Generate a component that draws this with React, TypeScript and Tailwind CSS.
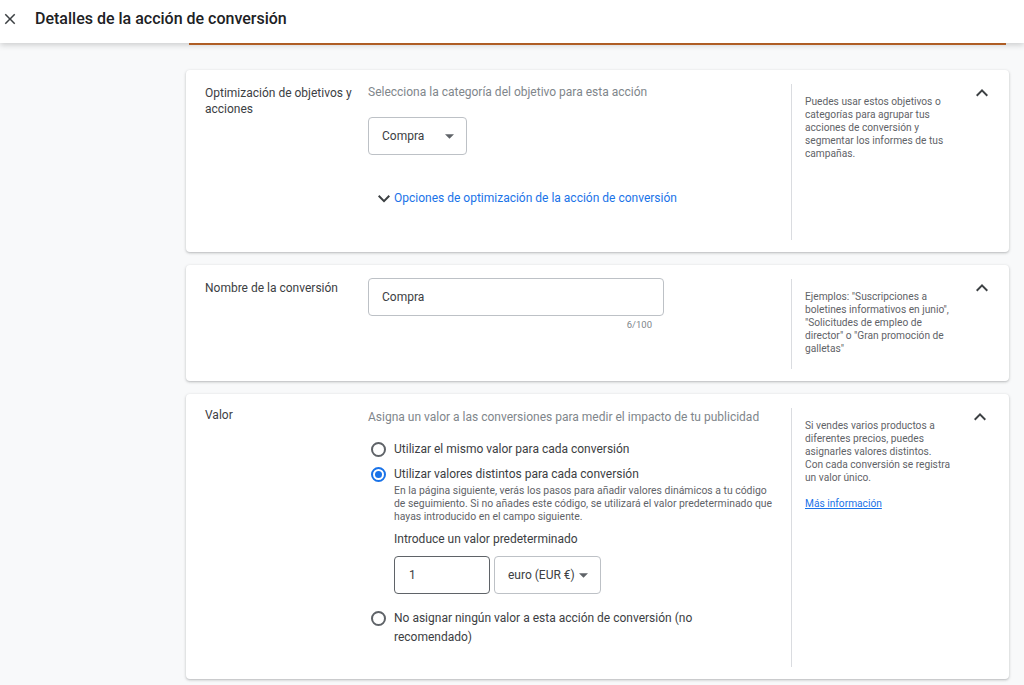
import { ReactNode } from 'react';

// Material-style glyphs used across the form
const ChevronUp = () => (
  <svg width="12" height="8" viewBox="6 8 12 8" className="fill-[#3c4043]">
    <path d="M12 8l-6 6 1.41 1.41L12 10.83l4.59 4.58L18 14z" />
  </svg>
);

const ChevronDown = () => (
  <svg width="12" height="8" viewBox="6 8.5 12 8" className="fill-[#3c4043]">
    <path d="M16.59 8.59L12 13.17 7.41 8.59 6 10l6 6 6-6z" />
  </svg>
);

const DropArrow = () => (
  <svg width="9" height="5" viewBox="7 10 10 5" className="shrink-0 fill-[#5f6368]">
    <path d="M7 10l5 5 5-5z" />
  </svg>
);

function Radio({ checked }: { checked?: boolean }) {
  return (
    <span
      className={
        checked
          ? 'flex h-[15px] w-[15px] shrink-0 items-center justify-center rounded-full border-2 border-[#1a73e8]'
          : 'flex h-[15px] w-[15px] shrink-0 items-center justify-center rounded-full border-2 border-[#5f6368]'
      }
    >
      {checked && <span className="h-[7px] w-[7px] rounded-full bg-[#1a73e8]" />}
    </span>
  );
}

interface SectionProps {
  label: string;
  height: string;
  helpWidth: string;
  labelTop?: string;
  children: ReactNode;
  help: ReactNode;
}

function Section({ label, height, helpWidth, labelTop = 'pt-[1px]', children, help }: SectionProps) {
  return (
    <div
      className={`flex rounded-[4px] bg-white pt-[14px] pb-[12px] shadow-[0_1px_2px_rgba(60,64,67,0.25),0_1px_3px_1px_rgba(60,64,67,0.08)] ${height}`}
    >
      <div className="w-[182px] shrink-0 pl-[19px] pr-[12px] text-[12px] leading-[16px] text-[#3c4043]">
        <div className={labelTop}>{label}</div>
      </div>
      <div className="w-[423px] shrink-0">{children}</div>
      <div className="flex flex-1 border-l border-[#dadce0]">
        <div className={`${helpWidth} shrink-0 pl-[13px] pt-[11px] text-[10.2px] leading-[13px] text-[#5f6368]`}>
          {help}
        </div>
        <div className="flex flex-1 justify-center pt-[5px]">
          <ChevronUp />
        </div>
      </div>
    </div>
  );
}

export default function App() {
  return (
    <div className="min-h-[685px] bg-[#f8f9fa] font-['Roboto',sans-serif]">
      <header className="relative z-10 flex h-[43px] items-center bg-white pb-[6px] shadow-[0_2px_6px_rgba(0,0,0,0.18)]">
        <svg width="18" height="18" viewBox="0 0 24 24" className="ml-[1px] fill-[#3c4043]">
          <path d="M19 6.41L17.59 5 12 10.59 6.41 5 5 6.41 10.59 12 5 17.59 6.41 19 12 13.41 17.59 19 19 17.59 13.41 12z" />
        </svg>
        <h1 className="ml-[16px] text-[16px] font-medium text-[#202124]">
          Detalles de la acción de conversión
        </h1>
      </header>

      <div className="ml-[186px] w-[823px]">
        <div className="mx-[3px] h-[2px] bg-[#c5692a]" />

        <div className="mt-[25px] flex flex-col gap-[13px] pb-[6px]">
          <Section
            label="Optimización de objetivos y acciones"
            height="h-[182px]"
            helpWidth="w-[162px]"
            help="Puedes usar estos objetivos o categorías para agrupar tus acciones de conversión y segmentar los informes de tus campañas."
          >
            <p className="text-[12px] leading-[17px] text-[#80868b]">
              Selecciona la categoría del objetivo para esta acción
            </p>
            <div className="mt-[16px] flex h-[38px] w-[99px] items-center justify-between rounded-[4px] border border-[#bdc1c6] pl-[13px] pr-[12px] text-[12px] text-[#3c4043]">
              <span>Compra</span>
              <DropArrow />
            </div>
            <div className="mt-[35px] flex items-center pl-[10px] text-[12px] leading-[17px] text-[#1a73e8]">
              <ChevronDown />
              <span className="ml-[4px]">Opciones de optimización de la acción de conversión</span>
            </div>
          </Section>

          <Section
            label="Nombre de la conversión"
            height="h-[116px]"
            helpWidth="w-[162px]"
            help={'Ejemplos: "Suscripciones a boletines informativos en junio", "Solicitudes de empleo de director" o "Gran promoción de galletas"'}
          >
            <div className="-mt-[1px] flex h-[38px] w-[296px] items-center rounded-[4px] border border-[#bdc1c6] pl-[13px] text-[12px] text-[#3c4043]">
              Compra
            </div>
            <div className="mt-[3px] w-[284px] text-right text-[9.5px] leading-[12px] text-[#80868b]">6/100</div>
          </Section>

          <Section
            label="Valor"
            height="h-[285px]"
            helpWidth="w-[158px]"
            labelTop="-mt-[1px]"
            help={
              <>
                <p>
                  Si vendes varios productos a diferentes precios, puedes asignarles valores distintos. Con cada
                  conversión se registra un valor único.
                </p>
                <p className="mt-[13px] text-[#1a73e8] underline">Más información</p>
              </>
            }
          >
            <p className="mt-[1px] text-[12px] leading-[17px] text-[#80868b]">
              Asigna un valor a las conversiones para medir el impacto de tu publicidad
            </p>
            <div className="mt-[15px] flex items-center">
              <span className="flex w-[26px] shrink-0 pl-[3px]">
                <Radio />
              </span>
              <span className="text-[12px] leading-[17px] text-[#3c4043]">
                Utilizar el mismo valor para cada conversión
              </span>
            </div>
            <div className="mt-[8px] flex">
              <span className="flex w-[26px] shrink-0 pl-[3px] pt-[1px]">
                <Radio checked />
              </span>
              <div>
                <p className="text-[12px] leading-[17px] text-[#3c4043]">Utilizar valores distintos para cada conversión</p>
                <p className="mt-[1px] w-[385px] text-[10.4px] leading-[13px] text-[#5f6368]">
                  En la página siguiente, verás los pasos para añadir valores dinámicos a tu código de seguimiento. Si no
                  añades este código, se utilizará el valor predeterminado que hayas introducido en el campo siguiente.
                </p>
                <p className="mt-[8px] text-[12px] leading-[17px] text-[#3c4043]">Introduce un valor predeterminado</p>
                <div className="mt-[8px] flex gap-[4px]">
                  <div className="flex h-[38px] w-[96px] items-center rounded-[4px] border border-[#5f6368] pl-[14px] text-[12px] text-[#3c4043]">
                    1
                  </div>
                  <div className="flex h-[38px] w-[107px] items-center justify-between whitespace-nowrap rounded-[4px] border border-[#bdc1c6] pl-[13px] pr-[12px] text-[12px] text-[#3c4043]">
                    <span>euro (EUR €)</span>
                    <DropArrow />
                  </div>
                </div>
              </div>
            </div>
            <div className="mt-[15px] flex">
              <span className="flex w-[26px] shrink-0 pl-[3px] pt-[2px]">
                <Radio />
              </span>
              <p className="w-[330px] text-[12px] leading-[19px] text-[#3c4043]">
                No asignar ningún valor a esta acción de conversión (no recomendado)
              </p>
            </div>
          </Section>
        </div>
      </div>
    </div>
  );
}
